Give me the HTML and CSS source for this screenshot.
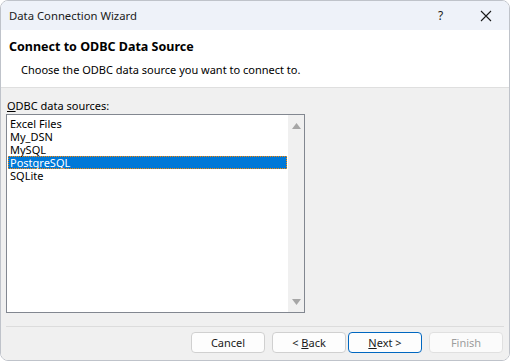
FILE: index.html
```html
<!DOCTYPE html>
<html>
<head>
<meta charset="utf-8">
<link rel="stylesheet" href="styles.css">
</head>
<body>
<div class="window">
  <div class="titlebar">
    <span class="title">Data Connection Wizard</span>
    <span class="help">?</span>
    <span class="close">
      <svg width="12" height="12" viewBox="0 0 12 12"><path d="M1 1L11 11M11 1L1 11" stroke="#1a1a1a" stroke-width="1.1" fill="none"/></svg>
    </span>
  </div>
  <div class="header">
    <div class="heading">Connect to ODBC Data Source</div>
    <div class="subheading">Choose the ODBC data source you want to connect to.</div>
  </div>
  <div class="body">
    <div class="label"><u>O</u>DBC data sources:</div>
    <div class="listbox">
      <ul class="items">
        <li>Excel Files</li>
        <li>My_DSN</li>
        <li>MySQL</li>
        <li class="selected">PostgreSQL</li>
        <li>SQLite</li>
      </ul>
      <div class="scrollbar">
        <svg class="arrow" width="9" height="6" viewBox="0 0 9 6"><path d="M0 6L4.5 0L9 6Z" fill="#a6a6a6"/></svg>
        <svg class="arrow" width="9" height="6" viewBox="0 0 9 6"><path d="M0 0L4.5 6L9 0Z" fill="#a6a6a6"/></svg>
      </div>
    </div>
    <div class="footer">
      <button class="btn">Cancel</button>
      <button class="btn">&lt; <u>B</u>ack</button>
      <button class="btn primary"><u>N</u>ext &gt;</button>
      <button class="btn disabled">Finish</button>
    </div>
  </div>
</div>
</body>
</html>
```

FILE: styles.css
```css
html, body {
  margin: 0;
  padding: 0;
  background: #ffffff;
}
body {
  font-family: "Noto Sans", "Open Sans", sans-serif;
  font-size: 11px;
  color: #000;
}
.window {
  width: 510px;
  height: 361px;
  box-sizing: border-box;
  border: 1px solid #bfc3ca;
  border-radius: 8px;
  overflow: hidden;
  display: flex;
  flex-direction: column;
}
.titlebar {
  height: 29px;
  background: #eef2f9;
  display: flex;
  align-items: center;
  padding-left: 8px;
  flex-shrink: 0;
  font-size: 11.3px;
}
.title {
  flex: 1;
  color: #1a1a1a;
}
.help {
  width: 12px;
  margin-right: 30px;
  color: #1a1a1a;
  font-size: 12px;
}
.close {
  display: flex;
  margin-right: 17px;
}
.header {
  height: 58px;
  background: #fff;
  border-bottom: 1px solid #dfdfdf;
  flex-shrink: 0;
  box-sizing: border-box;
  padding: 9px 0 0 8px;
}
.heading {
  font-weight: bold;
  font-size: 12.5px;
  line-height: 16px;
}
.subheading {
  margin-top: 7px;
  padding-left: 12px;
  line-height: 16px;
}
.body {
  flex: 1;
  background: #f0f0f0;
  padding: 10px 5px 0 5px;
  display: flex;
  flex-direction: column;
}
.label {
  line-height: 16px;
  padding-left: 1px;
}
.listbox {
  width: 299px;
  height: 199px;
  box-sizing: border-box;
  border: 1px solid #828790;
  background: #fff;
  display: flex;
}
.items {
  list-style: none;
  margin: 0;
  padding: 2px 0 0 1px;
  flex: 1;
}
.items li {
  height: 13px;
  line-height: 13px;
  padding-left: 2px;
}
.items li.selected {
  background: #0078d7;
  color: #fff;
  outline: 1px dotted #ff8800;
  outline-offset: -1px;
  margin-right: 1px;
}
.scrollbar {
  width: 16px;
  background: #f0f0f0;
  display: flex;
  flex-direction: column;
  justify-content: space-between;
  align-items: center;
  padding: 8px 0 7px 0;
}
.footer {
  margin-top: 13px;
  border-top: 1px solid #dcdcdc;
  display: flex;
  justify-content: flex-end;
  gap: 7px;
  padding-top: 5px;
  padding-right: 1px;
}
.btn {
  font-family: inherit;
  font-size: 11px;
  width: 74px;
  height: 21px;
  box-sizing: border-box;
  border: 1px solid #d0d0d0;
  border-radius: 4px;
  background: #fdfdfd;
  color: #1a1a1a;
  padding: 0;
}
.btn.primary {
  border: 1px solid #0067c0;
  margin-left: -5px;
}
.btn.disabled {
  color: #9d9d9d;
  background: #fbfbfb;
  border-color: #e0e0e0;
}
```
